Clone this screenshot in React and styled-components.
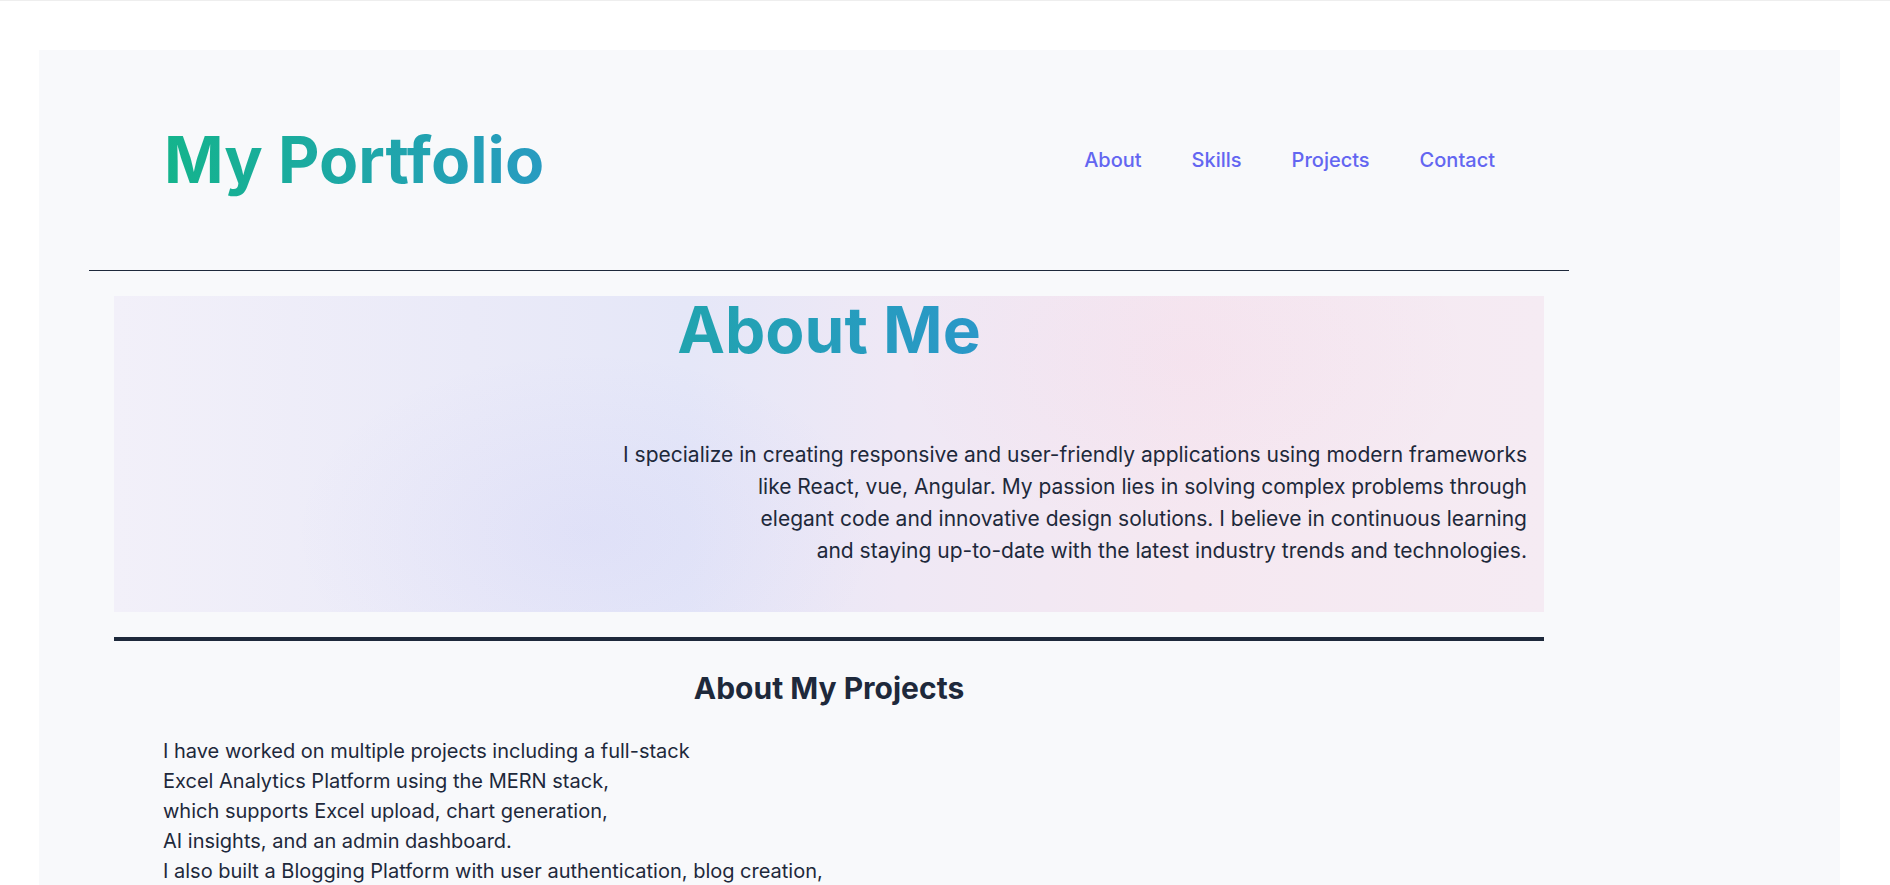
import React from "react";
import styled, { createGlobalStyle } from "styled-components";

const GlobalStyle = createGlobalStyle`
  html, body { margin: 0; padding: 0; background: #ffffff; }
  body {
    border-top: 1px solid #eeeeee;
    font-family: Inter, "Noto Sans", "Liberation Sans", sans-serif;
    color: #1e293b;
  }
  ::-webkit-scrollbar { width: 1px; }
  ::-webkit-scrollbar-track { background: #1e293b; }
  ::-webkit-scrollbar-thumb { background: linear-gradient(180deg, #8b5cf6, #ec4899); }
`;

const Page = styled.div`
  margin: 49px 50px 50px 39px;
  min-height: 2537px;
  background: #f8f9fb;
`;

const Column = styled.div`
  width: 1480px;
  margin-left: 50px;
`;

const Header = styled.header`
  display: flex;
  align-items: center;
  justify-content: space-between;
  height: 220px;
  padding: 0 74px 0 75px;
  border-bottom: 1px solid #1e293b;
`;

const Logo = styled.h1`
  margin: 0;
  font-size: 64px;
  font-weight: 700;
  line-height: 1.2;
  background: linear-gradient(90deg, #14b48c, #3b82f6);
  background-size: 200% 100%;
  -webkit-background-clip: text;
  background-clip: text;
  color: transparent;
`;

const Nav = styled.nav`
  display: flex;
  gap: 50px;
`;

const NavLink = styled.a`
  font-size: 20px;
  font-weight: 500;
  color: #6366f1;
  text-decoration: none;
`;

const About = styled.section`
  margin: 25px 25px 0;
  padding: 2px 17px 45px;
  background:
    radial-gradient(ellipse 420px 260px at 33% 75%, rgba(99, 102, 241, 0.06), transparent 70%),
    radial-gradient(ellipse 420px 260px at 75% 20%, rgba(236, 72, 153, 0.03), transparent 70%),
    linear-gradient(90deg, #f2f0f9 0%, #eaeaf8 25%, #e5e7f8 40%, #efe8f5 55%, #f5e8f1 75%, #f5ebf3 100%);
`;

const AboutTitle = styled.h2`
  margin: 0 0 77px;
  text-align: center;
  font-size: 64px;
  font-weight: 700;
  line-height: 1;
  background: linear-gradient(90deg, #10b981, #3b82f6);
  -webkit-background-clip: text;
  background-clip: text;
  color: transparent;
`;

const AboutText = styled.p`
  margin: 0;
  text-align: right;
  font-size: 21px;
  line-height: 32px;
  color: #1e293b;
`;

const Divider = styled.div`
  height: 4px;
  margin: 25px 25px 0;
  background: #1e293b;
`;

const Projects = styled.section`
  margin: 0 25px;
  padding: 29px 0 0;
`;

const ProjectsTitle = styled.h3`
  margin: 0 0 30px;
  text-align: center;
  font-size: 30px;
  font-weight: 700;
  line-height: 36px;
  color: #1e293b;
`;

const ProjectsText = styled.p`
  margin: 0;
  padding-left: 49px;
  font-size: 20px;
  line-height: 30px;
  color: #1e293b;
`;

const aboutLines = [
  "I specialize in creating responsive and user-friendly applications using modern frameworks",
  "like React, vue, Angular. My passion lies in solving complex problems through",
  "elegant code and innovative design solutions. I believe in continuous learning",
  "and staying up-to-date with the latest industry trends and technologies.",
];

const projectLines = [
  "I have worked on multiple projects including a full-stack",
  "Excel Analytics Platform using the MERN stack,",
  "which supports Excel upload, chart generation,",
  "AI insights, and an admin dashboard.",
  "I also built a Blogging Platform with user authentication, blog creation,",
  "commenting, and a responsive reading experience.",
];

const withBreaks = (lines) =>
  lines.map((l, i) => (
    <React.Fragment key={i}>
      {l}
      {i < lines.length - 1 && <br />}
    </React.Fragment>
  ));

export default function App() {
  return (
    <>
      <GlobalStyle />
      <Page>
        <Column>
          <Header>
            <Logo>My Portfolio</Logo>
            <Nav>
              <NavLink href="#about">About</NavLink>
              <NavLink href="#skills">Skills</NavLink>
              <NavLink href="#projects">Projects</NavLink>
              <NavLink href="#contact">Contact</NavLink>
            </Nav>
          </Header>
          <About id="about">
            <AboutTitle>About Me</AboutTitle>
            <AboutText>{withBreaks(aboutLines)}</AboutText>
          </About>
          <Divider />
          <Projects id="projects">
            <ProjectsTitle>About My Projects</ProjectsTitle>
            <ProjectsText>{withBreaks(projectLines)}</ProjectsText>
          </Projects>
        </Column>
      </Page>
    </>
  );
}
